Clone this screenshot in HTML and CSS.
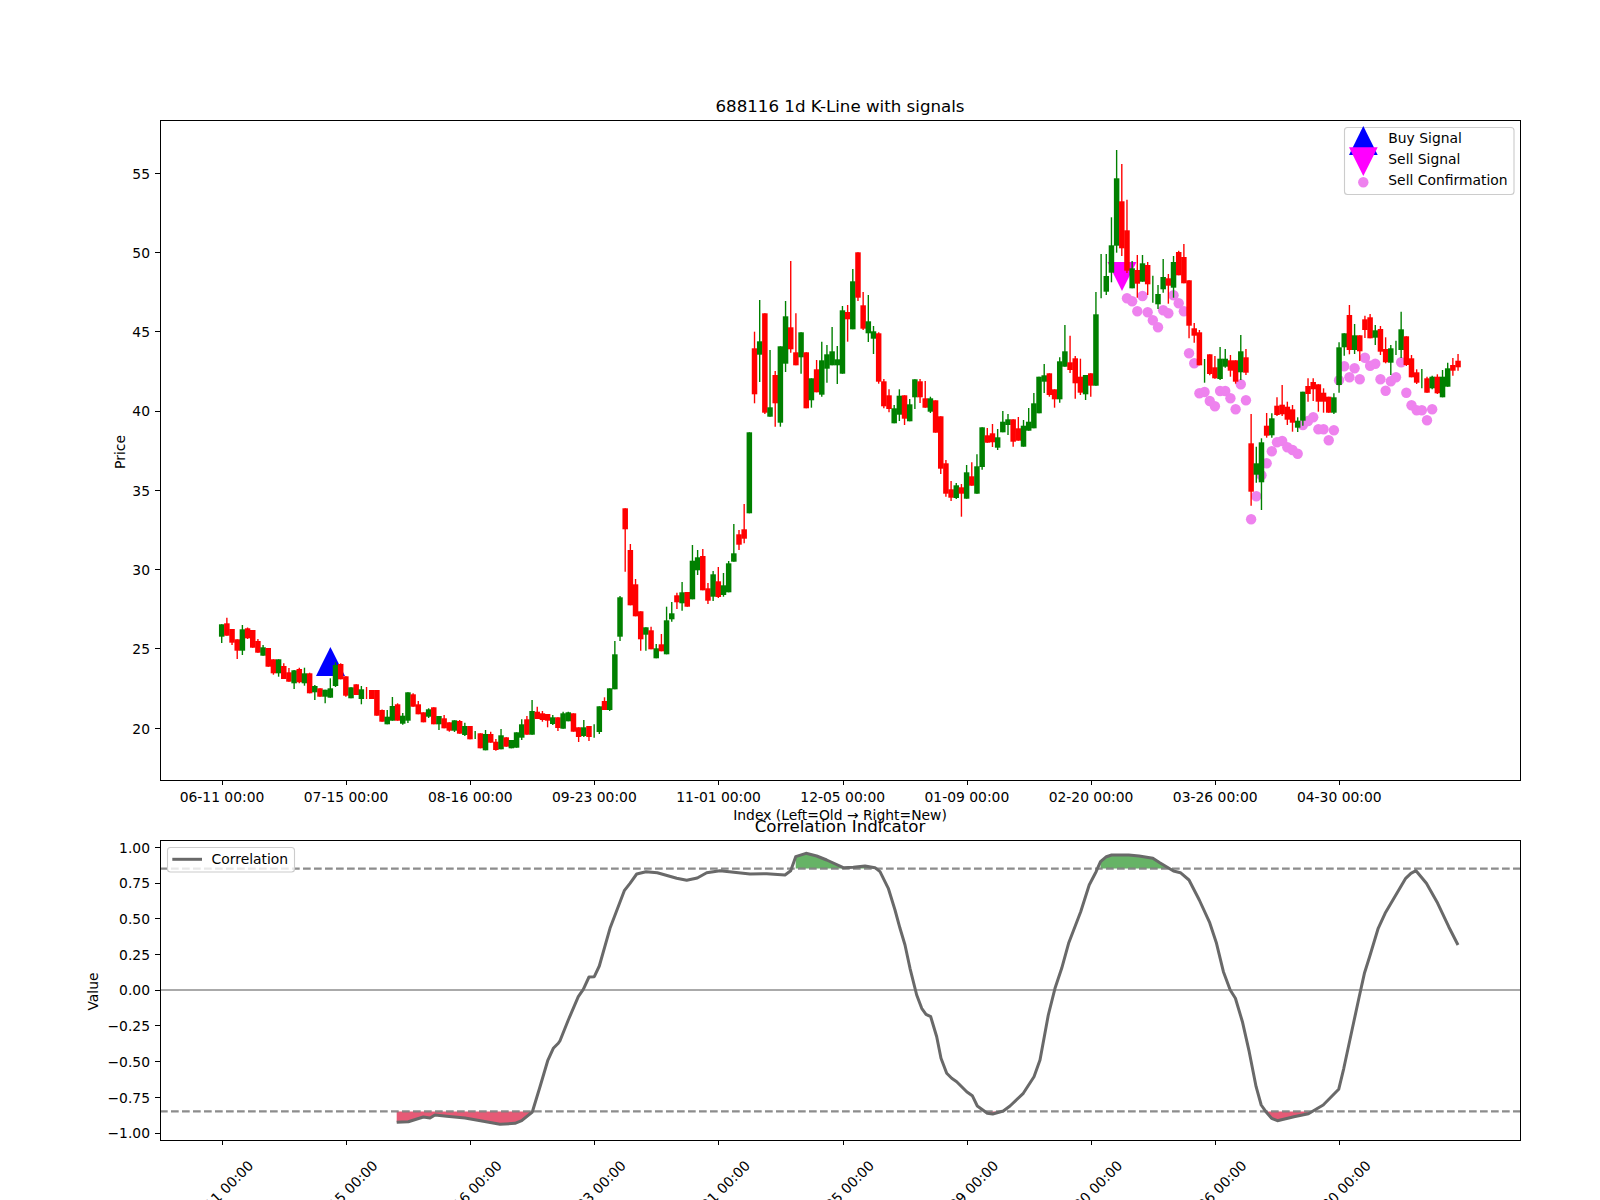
FILE: index.html
```html
<!DOCTYPE html>
<html lang="en">
<head>
<meta charset="utf-8">
<title>688116 1d K-Line with signals</title>
<link rel="stylesheet" href="styles.css">
</head>
<body>
<svg class="figure" xmlns="http://www.w3.org/2000/svg" width="1600" height="1200" viewBox="0 0 1600 1200">
  <!-- price panel -->
  <g id="dots"></g>
  <polygon class="buy" points="316,676 345,676 330.4,647"/>
  <polygon class="sell" points="1107.5,262 1136.5,262 1122,291"/>
  <g id="candles"></g>
  <rect class="spine" x="160.5" y="120.5" width="1360" height="660"/>
  <path class="tick" d="M222.5 780v5M346.5 780v5M470.5 780v5M594.5 780v5M718.5 780v5M843.5 780v5M967.5 780v5M1091.5 780v5M1215.5 780v5M1339.5 780v5M160 728.5h-5M160 648.5h-5M160 569.5h-5M160 490.5h-5M160 411.5h-5M160 331.5h-5M160 252.5h-5M160 173.5h-5"/>
  <g class="right">
    <text x="150" y="733.5">20</text>
    <text x="150" y="654.2">25</text>
    <text x="150" y="574.9">30</text>
    <text x="150" y="495.6">35</text>
    <text x="150" y="416.3">40</text>
    <text x="150" y="337">45</text>
    <text x="150" y="257.7">50</text>
    <text x="150" y="178.9">55</text>
  </g>
  <g class="mid">
    <text x="222" y="802">06-11 00:00</text>
    <text x="346.1" y="802">07-15 00:00</text>
    <text x="470.3" y="802">08-16 00:00</text>
    <text x="594.4" y="802">09-23 00:00</text>
    <text x="718.6" y="802">11-01 00:00</text>
    <text x="842.7" y="802">12-05 00:00</text>
    <text x="966.9" y="802">01-09 00:00</text>
    <text x="1091" y="802">02-20 00:00</text>
    <text x="1215.2" y="802">03-26 00:00</text>
    <text x="1339.3" y="802">04-30 00:00</text>
    <text x="840" y="820">Index (Left=Old → Right=New)</text>
    <text transform="translate(125 452) rotate(-90)">Price</text>
    <text transform="translate(98 991.5) rotate(-90)">Value</text>
  </g>
  <text class="title" x="840" y="112">688116 1d K-Line with signals</text>

  <rect class="legend" x="1344.5" y="127.5" width="169.5" height="67" rx="3"/>
  <polygon class="buy" points="1349,155 1377.7,155 1363.3,126"/>
  <polygon class="sell" points="1349,147.3 1377.7,147.3 1363.3,175.9"/>
  <circle class="confirm" cx="1363.3" cy="182.3" r="5.2"/>
  <text x="1388.3" y="143.3">Buy Signal</text>
  <text x="1388.3" y="164.3">Sell Signal</text>
  <text x="1388.3" y="185.3">Sell Confirmation</text>

  <!-- correlation panel -->
  <g id="fills"></g>
  <path class="dash" d="M160 868.6H1520M160 1111.4H1520"/>
  <path class="zero" d="M160 990H1520"/>
  <polyline id="curve" class="curve"/>
  <rect class="spine" x="160.5" y="840.5" width="1360" height="300"/>
  <path class="tick" d="M222.5 1140v5M346.5 1140v5M470.5 1140v5M594.5 1140v5M718.5 1140v5M843.5 1140v5M967.5 1140v5M1091.5 1140v5M1215.5 1140v5M1339.5 1140v5M160 847.5h-5M160 883.5h-5M160 918.5h-5M160 954.5h-5M160 990.5h-5M160 1025.5h-5M160 1061.5h-5M160 1097.5h-5M160 1133.5h-5"/>
  <g class="right">
    <text x="150" y="852.5">1.00</text>
    <text x="150" y="888.2">0.75</text>
    <text x="150" y="923.9">0.50</text>
    <text x="150" y="959.6">0.25</text>
    <text x="150" y="995.3">0.00</text>
    <text x="150" y="1031">−0.25</text>
    <text x="150" y="1066.7">−0.50</text>
    <text x="150" y="1103">−0.75</text>
    <text x="150" y="1138.1">−1.00</text>
  </g>
  <g class="mid">
    <text transform="translate(224.4 1196.5) rotate(-45)">06-11 00:00</text>
    <text transform="translate(348.5 1196.5) rotate(-45)">07-15 00:00</text>
    <text transform="translate(472.7 1196.5) rotate(-45)">08-16 00:00</text>
    <text transform="translate(596.8 1196.5) rotate(-45)">09-23 00:00</text>
    <text transform="translate(721 1196.5) rotate(-45)">11-01 00:00</text>
    <text transform="translate(845.1 1196.5) rotate(-45)">12-05 00:00</text>
    <text transform="translate(969.3 1196.5) rotate(-45)">01-09 00:00</text>
    <text transform="translate(1093.4 1196.5) rotate(-45)">02-20 00:00</text>
    <text transform="translate(1217.6 1196.5) rotate(-45)">03-26 00:00</text>
    <text transform="translate(1341.7 1196.5) rotate(-45)">04-30 00:00</text>
  </g>
  <text class="title" x="840" y="832">Correlation Indicator</text>

  <rect class="legend" x="167.5" y="847.5" width="127" height="24.5" rx="3"/>
  <path class="curve" d="M172.3 859.3H202"/>
  <text x="211.6" y="864.3">Correlation</text>
</svg>
<script src="chart.js"></script>
</body>
</html>
```
FILE: styles.css
```css
html, body {
  margin: 0;
  padding: 0;
  background: #ffffff;
}

.figure {
  display: block;
  font-family: "DejaVu Sans", sans-serif;
  font-size: 13.89px;
  fill: #000000;
}

.right { text-anchor: end; }
.mid { text-anchor: middle; }

.title {
  font-size: 16.67px;
  text-anchor: middle;
}

.spine {
  fill: none;
  stroke: #000000;
  stroke-width: 1px;
  shape-rendering: crispEdges;
}

.tick {
  fill: none;
  stroke: #000000;
  stroke-width: 1px;
  shape-rendering: crispEdges;
}

.buy { fill: #0000ff; }
.sell { fill: #ff00ff; }
.confirm { fill: #ee82ee; }

.red { fill: #ff0000; stroke: #ff0000; }
.green { fill: #008000; stroke: #008000; }
.wick { stroke-width: 1.39px; fill: none; }
.body { stroke: none; }

.legend {
  fill: #ffffff;
  fill-opacity: 0.8;
  stroke: #cccccc;
  stroke-width: 1.11px;
}

.dash {
  fill: none;
  stroke: #808080;
  stroke-opacity: 0.9;
  stroke-width: 2.08px;
  stroke-dasharray: 7.7 3.3;
}

.zero {
  fill: none;
  stroke: #aaaaaa;
  stroke-width: 2.08px;
}

.curve {
  fill: none;
  stroke: #696969;
  stroke-width: 3px;
  stroke-linejoin: round;
}

.fill-up { fill: #008000; fill-opacity: 0.6; }
.fill-down { fill: #dc143c; fill-opacity: 0.7; }
```
FILE: chart.js
```js
// Candles in pixel rows: [red?, body top, body bottom, wick top, wick bottom].
// A body of null is a candle that opened and closed at the same price.
var candles = [
[0,624.3,636.7,624.3,643],[1,623.3,635.7,617.7,635.7],[1,629,642.7,629,645],[1,639.3,650.7,639.3,659],
[0,629.3,650.7,625,655],[1,628.3,638.3,627.5,639],[1,630,647.7,630,647.7],[1,641,652.7,639,652.7],
[0,647.3,655.7,645,655.7],[1,648,666.7,648,666.7],[1,659.3,673.3,659.3,674.7],[0,659.3,673.3,659.3,676.7],
[1,666,679,663.3,679],[1,672.3,681.7,668,681.7],[0,670.3,683.3,670,689],[1,669,682.3,667.7,683.3],
[0,673.3,683.3,667.7,685.7],[1,673.3,693.3,672.7,693.3],[0,686,692.3,685,700],[1,688.3,696.7,688.3,696.7],
[0,689.7,696.7,689.7,703.3],[0,688.3,697.7,678.3,697.7],[0,665,686,662.3,687],[1,664,679.3,663.3,679.3],
[1,676.3,695.7,676.3,696.7],[0,687.3,698.3,687.3,698.3],[1,684.3,695,684.3,695],[0,689.3,699,686,704.3],
[1,null,null,687,699],[1,690,699,690,699],[1,690,715.7,690,715.7],[1,710,721.7,709.5,721.7],
[0,716.7,724.3,710,724.3],[0,706,720.7,697,720.7],[1,704.3,720.7,703.3,720.7],[0,715.7,723.7,713,724.7],
[0,692.3,720.7,692.3,723],[1,694.3,706.7,693.3,706.7],[1,704.3,714.3,701,714.3],[1,712.3,722.3,712.3,722.3],
[0,709.3,716.7,708.3,718],[1,707.3,724.3,707.3,724.3],[0,716,724.3,716,730],[1,718.3,728.3,715,728.3],
[1,722.3,730.7,722.3,731.7],[0,720.3,730.7,720.3,732],[1,721,733.7,720,733.7],[0,726,735,722.7,736],
[1,726,739.3,726,739.3],[0,null,null,731,739],[1,733.3,748.3,733.3,748.3],[0,734,750.3,730,750.3],
[1,734,742.7,731.7,742.7],[1,741.7,750,739,750.7],[0,735.3,749.3,729,749.3],[1,737.3,746.7,737.3,746.7],
[0,740,748.3,740,748.3],[0,732.3,747.7,732.3,747.7],[0,724.3,737.7,719.3,740],[1,719.3,734.7,716,734.7],
[0,711,734.7,700,734.7],[1,711.7,719,706.7,719],[1,713.3,720,711,721.7],[1,714,720.7,714,727.3],
[0,717.3,724,715,725],[1,717.3,728,717.3,731],[0,713.3,728.7,711.7,728.7],[0,712.3,721.3,711.7,721.3],
[1,713.3,731.7,713.3,731.7],[1,727.3,737,727.3,742],[0,727.3,736,720,737],[1,726,737,726,741],
[0,null,null,724.3,737.7],[0,706.3,732,706.3,734],[1,701,710,697.3,710],[0,688.3,710,688.3,711],
[0,654.3,689.3,641,689.3],[0,597.3,636.7,596,641],[1,508.3,529.3,508.3,571.7],[1,550,605.3,544,605.3],
[1,584.3,616.3,579,616.3],[1,611.3,639.3,611.3,650.7],[0,627.3,634.7,627.3,650.7],[1,630.3,649.3,626.7,649.3],
[0,648.3,658.3,644,658.3],[1,644.3,651.3,634,651.3],[0,620.3,654.3,606.7,654.3],[0,613.3,619.3,602,621.7],
[1,595.3,602.3,592.7,609],[0,592.3,603.3,582,610.7],[1,592,606.7,592,606.7],[0,560.7,599.3,545,599.3],
[0,557.3,570.3,550,575],[1,556,590.3,549,590.3],[1,588.3,600.7,583,604],[0,574.3,596.7,571,601],
[1,581.3,597,567,598],[0,585.3,595,573,596.7],[0,563.3,592.3,561,592.3],[0,553.3,561.7,524,561.7],
[1,534.3,544.7,530,550],[1,529.3,538.7,504,543.3],[0,432.3,513.3,432.3,513.3],[1,348.3,394.3,331.7,403.3],
[0,341.3,354.7,300,382],[1,313.3,412.7,313.3,414],[0,407.3,416.7,350,416.7],[1,375,403.3,371,426.7],
[0,346.3,422.7,346.3,426.7],[0,316.3,363.7,301,372],[1,327.3,349.3,261,352.7],[1,352.3,365.3,313.3,365.3],
[0,332.3,357.3,332.3,373.7],[1,352.3,408.3,352.3,408.3],[0,378.3,400.3,378.3,407.7],[1,369.3,392.3,360,392.3],
[0,360.3,394.7,341.7,396.7],[0,354.3,368.7,345,382.7],[0,351.3,365.3,327,365.3],[0,359.3,365.3,346,384],
[0,310.3,373.7,306,373.7],[1,312,319.3,305,341.7],[0,281.3,329.3,269,329.3],[1,252.3,297.7,252.3,301],
[1,305.3,328.7,292,330],[0,321.3,333.3,295,342],[0,331.3,338.7,326,354],[1,333.3,381.7,332.3,383.7],
[1,381.3,406.3,379,408.3],[1,395.3,409,389.3,412.3],[0,408.3,423.3,405,423.3],[0,395.7,414.7,389.3,421],
[1,395.3,418.7,395.3,425],[0,404.3,421.3,399,421.3],[0,379.3,397.3,379.3,409],[1,381.3,397.3,379,403],
[1,398.3,407.7,381,407.7],[0,398.3,411.7,396.7,413],[1,400.3,432.7,400.3,432.7],[1,416.3,468.7,416.3,474],
[1,463.3,493.7,460,496.7],[1,489.3,497.7,481,501],[0,485.3,498,483,499],[1,487.3,493.7,484,516.7],
[0,472.3,498.7,465,498.7],[1,476.3,485.7,462.3,485.7],[0,466.3,493.7,454.3,493.7],[0,427.3,467,427.3,469.7],
[1,435.3,442.7,428,442.7],[1,433.3,442.3,424,447],[0,437.3,447.7,429,450],[0,421.7,432.3,411,432.3],
[0,419.3,425,414,435],[1,419.3,441.7,419.3,446.7],[1,428.3,440.7,417,440.7],[0,425.7,446.7,420,446.7],
[0,421.7,430.7,408,430.7],[0,403.3,428.3,393,428.3],[0,376.7,413.3,376.7,413.3],[0,375.3,381.7,364,393],
[1,373.3,395,373.3,396.7],[1,389.3,399.3,389.3,407.7],[0,361.3,399.3,357.3,402.7],[0,351.3,366.7,325,366.7],
[1,362.3,370,335.7,373],[1,358.3,383.3,356,398.7],[1,376.7,392.7,358.7,395],[0,375,394.3,375,400],
[1,373.3,385.7,373.3,396.7],[0,314.3,385.7,292,385.7],[0,null,null,254,298.3],[0,276,291.7,254,295],
[0,245.3,272.7,217.3,282.3],[0,178.3,245.7,150,252.7],[1,201.3,248.3,164,256],[1,230.3,270.7,199.7,273],
[0,268.3,288.3,261,288.3],[1,270,283.7,255,297.7],[0,263.3,281.7,255,281.7],[1,265,284.3,262,295],
[0,null,null,275.7,302.7],[0,294,304.3,285,309],[0,277,289.3,259,292.7],[1,278.3,285.7,274,303.7],
[0,262,287.7,256,297.7],[1,252,275.3,250.7,275.3],[1,257,283.3,244,283.3],[1,280.3,325.7,280.3,338.3],
[1,328.3,335.7,323,342.7],[1,332.3,365.3,330,365.3],[0,null,null,359,382.7],[1,354.3,374,354.3,375.3],
[1,367.3,378.3,356,378.7],[0,358.7,379,347,380],[0,358.7,366.7,349,367.7],[1,360.3,370.7,355,376.7],
[1,360.3,381.7,360.3,383.7],[0,351.3,372.3,335,380],[1,357.3,372.7,349,375],[1,443.3,491.7,414,505.7],
[0,463.3,474.7,446.7,482.7],[0,442.3,482.3,438.3,510],[1,425.7,435.7,413,437.7],[0,418.3,435.3,413.3,437.7],
[1,405.7,415,397.3,416],[1,404.7,414.3,385,416],[1,406.7,419.7,401.7,425],[1,409.3,422.7,405,431.7],
[0,420.7,427.7,417.3,432],[0,391.7,420.7,391.7,425.7],[1,386,394,378.3,401.7],[1,382,389.3,378.3,401],
[1,384.3,401.7,384.3,411.7],[1,392.7,401.7,388.3,412.7],[1,396.7,412.7,396.7,412.7],[0,397.3,412.7,393.3,414],
[0,347.3,385,342.3,392.7],[0,333.3,347.3,333.3,355.7],[1,315,350,305,354.3],[0,335.3,350,324,354],
[1,335.3,351.3,335.3,361],[1,319.3,330,315.7,338],[1,317.3,338.3,314,338.3],[0,330.3,337.7,325,345],
[1,329,351.7,326,355],[1,349,362.3,337.3,363.3],[0,348.3,362.7,345,375],[0,null,null,340.7,355],
[0,329.3,350,311.7,358],[1,336.3,365,336.3,366],[1,358.3,377.3,355,377.3],[1,372.3,382.7,369.3,384],
[0,null,null,369,388.3],[1,378.3,392.7,376.7,392.7],[0,376.7,388.3,375.7,389.3],[1,376.7,393.3,374.3,394],
[0,376.7,397.3,370,397.3],[0,368.3,386.7,362.7,386.7],[1,365,370.7,358,375.7],[1,360.7,367.3,354,370.7]
];

// Sell-confirmation dots, one row per candle starting at candle 175.
var dotRows = [
298.3,301.3,311.3,296,312.3,320.3,327.3,310.3,313.3,295.3,303.3,311.3,353.3,363.3,393.3,392,
401,406.3,391,391,398.3,409.3,384.3,400.3,519.3,496.3,475.3,463.3,451.3,442.3,441,447.3,
450,453.7,425,421,417.3,429.3,429.3,440.3,430.3,380.3,366.3,377.3,368.3,379.3,357.7,365.7,
363.7,379.3,390.7,381.3,377.3,362.3,392.7,405.3,410.3,410.3,420.3,409.3
];

// Correlation curve in page pixels.
var curve = [
[396.7,1122.3],[408.3,1121.7],[423.3,1117],[430,1118],[435,1115],[446.7,1116.3],[465,1118],[483.3,1121.3],
[500,1124.3],[515,1123.3],[521.7,1120.7],[532.3,1112],[540,1086.7],[547.7,1060.7],[553.3,1048.3],[558.3,1043.3],
[560,1040.7],[568.3,1020],[578.3,996.7],[583.3,989.3],[589,977],[594.3,976.7],[599.3,966],[610,928.3],
[624.3,890.7],[630,883.3],[636.7,874],[646,871.7],[657.3,872.7],[676.7,878.3],[686.7,880.3],[697.3,878],
[706.7,872.7],[720,870.7],[750,874],[766.7,873.7],[785,875],[790.7,870.7],[795.7,856.7],[806,853.3],
[816.7,856],[826.7,860],[843.3,867.7],[853.3,867.3],[865,866],[875,867.7],[880,871.7],[888.3,888.3],
[895,910],[900,928.3],[905,945],[910,968.3],[916.7,995],[921.7,1008.3],[926,1014.3],[930.7,1016.7],
[936.7,1036.7],[941,1058.3],[946.7,1073.3],[951.7,1078.3],[956.7,1081.7],[966.7,1091.7],[972.3,1095.7],[977.3,1106],
[987.3,1113.3],[992.7,1114],[1003.3,1111],[1010,1106],[1023.3,1093.3],[1034,1076.7],[1040,1060],[1048.3,1015],
[1055,988.3],[1061.7,968.3],[1068.6,943.3],[1080.7,911.7],[1089.2,885],[1096.1,871.7],[1100.5,861.7],[1106.4,856.7],
[1111.6,855],[1128.8,855],[1139.1,856],[1152.9,858.3],[1159.8,862.7],[1173.5,871],[1180.4,872.7],[1189,880],
[1199.3,900],[1209.7,922.7],[1216.5,943.3],[1223.4,971.7],[1230.2,990],[1235.4,998.3],[1242.4,1021.7],[1249.2,1051.7],
[1256.1,1086.7],[1261.2,1105],[1266.4,1112.3],[1271.6,1118.3],[1277.4,1120.7],[1293.9,1116.7],[1308.4,1113.7],[1323.2,1105],
[1338.7,1089.3],[1343.8,1068.3],[1352.4,1028.3],[1359.2,996.7],[1364.4,973.3],[1369.6,956.7],[1378.2,928.3],[1385.1,913.3],
[1405.7,878.3],[1410.9,873.3],[1416,870.7],[1426.4,883.3],[1437.7,903.3],[1448.7,926.7],[1458,945]
];

var SVG = 'http://www.w3.org/2000/svg';

function el(parent, name, attrs) {
  var node = document.createElementNS(SVG, name);
  for (var k in attrs) node.setAttribute(k, attrs[k]);
  parent.appendChild(node);
  return node;
}

function xAt(i) { return 221.7 + 5.173 * i; }

var candleLayer = document.getElementById('candles');
candles.forEach(function (c, i) {
  var tone = c[0] ? 'red' : 'green';
  var x = xAt(i);
  el(candleLayer, 'line', { 'class': 'wick ' + tone, x1: x, x2: x, y1: c[3], y2: c[4] });
  if (c[1] !== null) {
    el(candleLayer, 'rect', { 'class': 'body ' + tone, x: x - 2.75, y: c[1], width: 5.5, height: c[2] - c[1] });
  }
});

var dotLayer = document.getElementById('dots');
dotRows.forEach(function (y, n) {
  el(dotLayer, 'circle', { 'class': 'confirm', cx: xAt(175 + n), cy: y, r: 5.2 });
});

document.getElementById('curve').setAttribute('points', curve.map(function (p) { return p.join(','); }).join(' '));

// Shaded bands between the curve and the +/-0.85 levels.
function band(x0, x1, level, cls) {
  var pts = curve.filter(function (p) { return p[0] >= x0 && p[0] <= x1; });
  var ring = pts.map(function (p) { return p.join(','); });
  ring.push(pts[pts.length - 1][0] + ',' + level, pts[0][0] + ',' + level);
  el(document.getElementById('fills'), 'polygon', { 'class': cls, points: ring.join(' ') });
}
band(795, 844, 868.6, 'fill-up');
band(853, 876, 868.6, 'fill-up');
band(1100, 1175, 868.6, 'fill-up');
band(396, 533, 1111.4, 'fill-down');
band(987, 1004, 1111.4, 'fill-down');
band(1266, 1311, 1111.4, 'fill-down');
```
